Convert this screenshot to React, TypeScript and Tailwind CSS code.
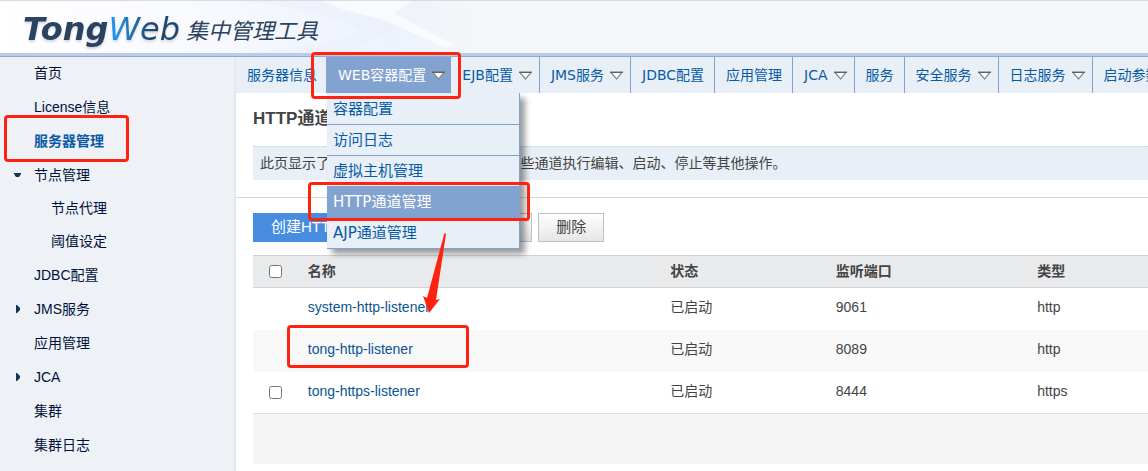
import { ReactNode, useState } from "react";
import clsx from "clsx";

interface SideItem {
  label: string;
  active?: boolean;
  state?: "open" | "closed";
  children?: string[];
}

const SIDE_ITEMS: SideItem[] = [
  { label: "首页" },
  { label: "License信息" },
  { label: "服务器管理", active: true },
  { label: "节点管理", state: "open", children: ["节点代理", "阈值设定"] },
  { label: "JDBC配置" },
  { label: "JMS服务", state: "closed" },
  { label: "应用管理" },
  { label: "JCA", state: "closed" },
  { label: "集群" },
  { label: "集群日志" },
];

const TABS = [
  { label: "EJB配置", menu: true },
  { label: "JMS服务", menu: true },
  { label: "JDBC配置", menu: false },
  { label: "应用管理", menu: false },
  { label: "JCA", menu: true },
  { label: "服务", menu: false },
  { label: "安全服务", menu: true },
  { label: "日志服务", menu: true },
  { label: "启动参数", menu: false },
];

const WEB_MENU = ["容器配置", "访问日志", "虚拟主机管理", "HTTP通道管理", "AJP通道管理"];

const LISTENERS = [
  { name: "system-http-listener", status: "已启动", port: 9061, type: "http", removable: false },
  { name: "tong-http-listener", status: "已启动", port: 8089, type: "http", removable: false },
  { name: "tong-https-listener", status: "已启动", port: 8444, type: "https", removable: true },
];

function DownTriangle() {
  return (
    <svg width="13" height="9" viewBox="0 0 13 9" className="shrink-0" aria-hidden="true">
      <path d="M1 1.5h11L6.5 8z" fill="#fff" stroke="#8a8a8a" strokeWidth="1.2" />
      <path d="M0 1.2h13" stroke="#555" strokeWidth="1.2" />
    </svg>
  );
}

function TreeMarker({ state }: { state: "open" | "closed" }) {
  return (
    <svg width="8" height="8" viewBox="0 0 8 8" className="absolute left-[14px] top-[13px]" aria-hidden="true">
      <path d={state === "open" ? "M0 2h7v1L5 6H2L0 3z" : "M2 0h1l3 3v2L3 8H2z"} fill="#16344f" />
    </svg>
  );
}

function Header() {
  return (
    <header className="relative flex h-[53px] items-center overflow-hidden border-t border-[#d9dbe0] bg-[#f5f7f9]">
      <svg className="absolute left-0 top-0" width="480" height="53" viewBox="0 0 480 53" aria-hidden="true">
        <defs>
          <linearGradient id="fade" x1="0" x2="1" y1="0" y2="0">
            <stop offset="0" stopColor="#fff" />
            <stop offset=".45" stopColor="#f8f9fe" />
            <stop offset=".82" stopColor="#edf2fc" />
            <stop offset="1" stopColor="#f5f7f9" />
          </linearGradient>
        </defs>
        <path d="M0 0h480v53H0z" fill="url(#fade)" />
        <path d="M235 0h90l70 25-50 28H230q120-10 130-25Q310 5 235 0z" fill="#e9effa" opacity=".5" />
        <path d="M322 0h90l-18 12 60 32-8 3-62-28-40-10z" fill="#fff" opacity=".6" />
      </svg>
      <h1 className="relative flex items-center pl-[23px] pt-1 text-[#2b4260]">
        <span className="font-['DejaVu_Sans',sans-serif] text-[32px] leading-[36px] italic drop-shadow-[0_2px_1px_#d3d7de]">
          <span className="font-bold">Tong</span>
          <span className="bg-linear-to-r from-[#1d93ec] from-10% to-[#20466f] to-60% bg-clip-text pr-[2px] text-transparent">
            Web
          </span>
        </span>
        <span className="ml-1 font-['Noto_Sans_CJK_SC',sans-serif] text-[22px] leading-[36px] italic">
          集中管理工具
        </span>
      </h1>
    </header>
  );
}

function Sidebar() {
  return (
    <aside className="w-[236px] shrink-0 border-r-2 border-[#e4e8f1] bg-[#eef1f6]">
      <ul className="-mt-px text-[14px] text-[#00113c]">
        {SIDE_ITEMS.map((item) => (
          <li key={item.label} className="relative">
            {item.state && <TreeMarker state={item.state} />}
            <a
              href="#"
              className={clsx("block pl-[34px] leading-[34px]", item.active && "font-bold text-[#0a5aa5]")}
            >
              {item.label}
            </a>
            {item.children && (
              <ul>
                {item.children.map((child) => (
                  <li key={child}>
                    <a href="#" className="block pl-[51px] leading-[33px]">
                      {child}
                    </a>
                  </li>
                ))}
              </ul>
            )}
          </li>
        ))}
      </ul>
    </aside>
  );
}

function TabBar() {
  return (
    <nav className="relative z-10 flex h-9 whitespace-nowrap bg-[#e8eff7] font-['DejaVu_Sans','Noto_Sans_CJK_SC',sans-serif] text-[14px] text-[#075ba5]">
      <a href="#" className="flex shrink-0 items-center pl-[11px] pr-[9px]">
        服务器信息
      </a>
      <div className="relative shrink-0">
        <button className="flex h-9 items-center gap-[6px] bg-[#82a3d0] pl-3 pr-[6px] text-white">
          WEB容器配置
          <DownTriangle />
        </button>
        <ul className="absolute left-px top-9 w-[193px] border-r border-[#82a3d0] bg-[#e8eff7] pt-px text-[15px] shadow-[5px_5px_6px_rgba(0,0,0,0.4)]">
          {WEB_MENU.map((label) => (
            <li key={label} className="border-b border-[#82a3d0]">
              <a
                href="#"
                className={clsx(
                  "block pl-[6px] leading-[30px]",
                  label === "HTTP通道管理" && "bg-[#82a3d0] text-white"
                )}
              >
                {label}
              </a>
            </li>
          ))}
        </ul>
      </div>
      {TABS.map((tab) => (
        <a
          key={tab.label}
          href="#"
          className={clsx(
            "flex shrink-0 items-center gap-[6px] border-r border-[#82a3d0] pl-[11px] last:border-r-0",
            tab.menu ? "pr-[7px]" : "pr-[10px]"
          )}
        >
          {tab.label}
          {tab.menu && <DownTriangle />}
        </a>
      ))}
    </nav>
  );
}

function GreyButton({ children }: { children: ReactNode }) {
  return (
    <button className="h-[29px] border border-[#c0c0c0] bg-linear-to-b from-white to-[#e6e6e6] px-[17px] text-[#444]">
      {children}
    </button>
  );
}

function ListenerTable() {
  const [selected, setSelected] = useState<string[]>([]);

  const toggle = (name: string) => {
    setSelected((prev) => (prev.includes(name) ? prev.filter((n) => n !== name) : [...prev, name]));
  };

  return (
    <table className="w-full table-fixed border-collapse text-left text-[14px] text-[#444]">
      <colgroup>
        <col className="w-[5%]" />
        <col className="w-[40.5%]" />
        <col className="w-[18.5%]" />
        <col className="w-[22.5%]" />
        <col />
      </colgroup>
      <thead>
        <tr className="h-8 border-y border-[#cfd1d4] bg-[#e8eaec]">
          <th className="pl-4">
            <input type="checkbox" aria-label="全选" className="block size-[13px]" />
          </th>
          <th className="pl-[10px]">名称</th>
          <th className="pl-[10px]">状态</th>
          <th className="pl-[10px]">监听端口</th>
          <th className="pl-[10px]">类型</th>
        </tr>
      </thead>
      <tbody>
        {LISTENERS.map((row) => (
          <tr key={row.name} className="h-[42px] even:bg-[#f8f8f8]">
            <td className="pl-4">
              {row.removable && (
                <input
                  type="checkbox"
                  aria-label={row.name}
                  className="block size-[13px]"
                  checked={selected.includes(row.name)}
                  onChange={() => toggle(row.name)}
                />
              )}
            </td>
            <td className="pb-[2px] pl-[10px]">
              <a href="#" className="text-[#0a5493]">
                {row.name}
              </a>
            </td>
            <td className="pb-[2px] pl-[10px]">{row.status}</td>
            <td className="pb-[2px] pl-[10px]">{row.port}</td>
            <td className="pb-[2px] pl-[10px]">{row.type}</td>
          </tr>
        ))}
      </tbody>
      <tfoot>
        <tr className="h-[50px] border-t border-[#dedede] bg-[#f5f5f5]">
          <td colSpan={5} />
        </tr>
      </tfoot>
    </table>
  );
}

function Mark({ className }: { className: string }) {
  return <div className={clsx("pointer-events-none absolute z-20 rounded-[4px] border-3 border-[#ff2211]", className)} />;
}

export default function App() {
  return (
    <div className="relative flex min-h-screen flex-col overflow-hidden bg-white font-['Liberation_Sans','Noto_Sans_CJK_SC',sans-serif]">
      <Header />
      <div className="h-1 border-b border-[#8eacd6] bg-[#b7cdea]" />
      <div className="flex grow">
        <Sidebar />
        <main className="min-w-0 grow">
          <TabBar />
          <h2 className="pl-[17px] pt-[13px] text-[17px] leading-[26px] font-bold text-[#444]">HTTP通道管理</h2>
          <p className="ml-[17px] mt-[14px] border-t border-dotted border-[#c5cbd3] bg-[#e8eff7] pl-[7px] text-[14px] leading-[33px] text-[#444]">
            此页显示了所有的HTTP通道，您可以对这些通道执行编辑、启动、停止等其他操作。
          </p>
          <hr className="mt-[17px] border-[#d5d7dc]" />
          <div className="flex gap-[6px] pl-[17px] pt-[15px] text-[15px]">
            <button className="h-[29px] bg-[#468de0] px-[18px] text-white">创建HTTP通道</button>
            <GreyButton>启动</GreyButton>
            <GreyButton>停止</GreyButton>
            <GreyButton>删除</GreyButton>
          </div>
          <div className="pl-[17px] pt-[13px]">
            <ListenerTable />
          </div>
        </main>
      </div>

      <Mark className="left-[311px] top-[52px] h-[47px] w-[150px]" />
      <Mark className="left-1 top-[115px] h-[47px] w-[125px]" />
      <Mark className="left-[308px] top-[182px] h-[39px] w-[222px]" />
      <Mark className="left-[287px] top-[325px] h-[43px] w-[182px]" />
      <svg
        className="pointer-events-none absolute left-[422px] top-[232px] z-20"
        width="26"
        height="82"
        viewBox="0 0 26 82"
        aria-hidden="true"
      >
        <path d="M22.5 1L24 2L14 68L18 67L7 81L1 64L5 66z" fill="#ff2211" />
      </svg>
    </div>
  );
}
